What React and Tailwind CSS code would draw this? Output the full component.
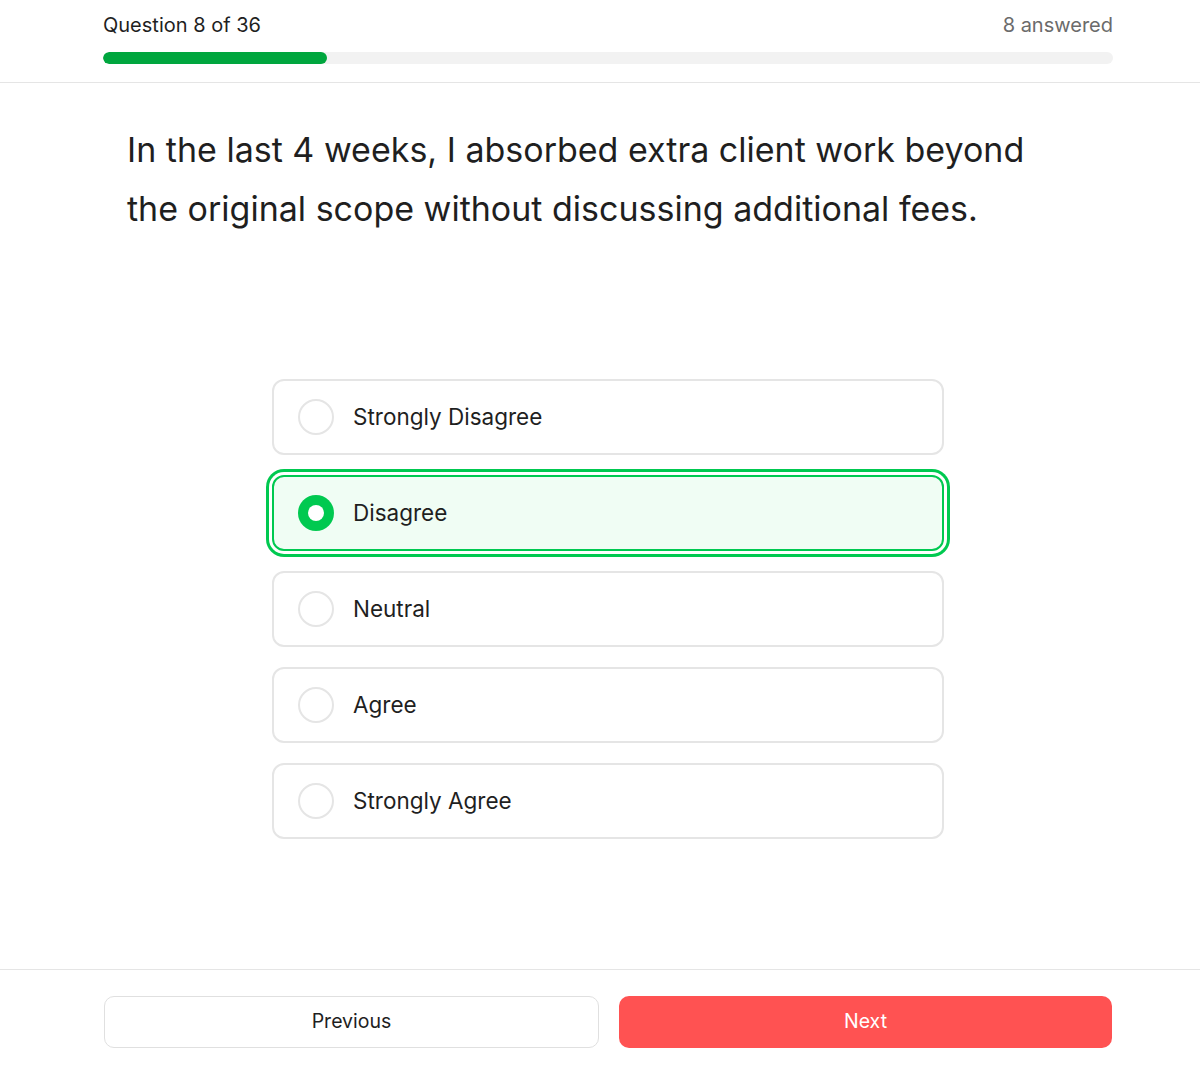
import React, { useState } from "react";

const OPTIONS = ["Strongly Disagree", "Disagree", "Neutral", "Agree", "Strongly Agree"];

export default function App() {
  const [selected, setSelected] = useState(1);
  const current = 8;
  const total = 36;

  return (
    <div
      className="h-screen flex flex-col bg-white text-[#1f1f1f]"
      style={{ fontFamily: "Inter, 'Noto Sans', sans-serif" }}
    >
      {/* header */}
      <header className="border-b border-[#e5e5e5] pl-4">
        <div className="w-[1010px] mx-auto pt-[12px] pb-[18px]">
          <div className="flex items-center justify-between h-[26px]">
            <span className="text-[20px] text-[#1f1f1f]">
              Question {current} of {total}
            </span>
            <span className="text-[20px] text-[#6b6b6b]">{current} answered</span>
          </div>
          <div className="mt-[14px] h-[12px] rounded-full bg-[#f2f2f2] overflow-hidden">
            <div className="h-full rounded-full bg-[#00a63e]" style={{ width: `${(current / total) * 100}%` }} />
          </div>
        </div>
      </header>

      {/* question + answers */}
      <main className="flex-1 pl-4">
        <div className="w-[1010px] mx-auto px-6 pt-[37px]">
          <h1 className="max-w-[930px] text-[34px] leading-[59px] text-[#1f1f1f]">
            In the last 4 weeks, I absorbed extra client work beyond the original scope without discussing additional fees.
          </h1>
        </div>

        <div className="w-[672px] mx-auto mt-[141px] flex flex-col gap-5">
          {OPTIONS.map((label, i) => {
            const active = i === selected;
            return (
              <button
                key={label}
                onClick={() => setSelected(i)}
                className={`h-[76px] w-full flex items-center gap-[19px] px-6 rounded-xl border-2 text-left ${
                  active
                    ? "border-[#00c950] bg-[#f0fdf4] ring-[3px] ring-[#00c950] ring-offset-[3px]"
                    : "border-[#e5e5e5] bg-white"
                }`}
              >
                <span
                  className={`w-[36px] h-[36px] rounded-full flex items-center justify-center shrink-0 ${
                    active ? "bg-[#00c950]" : "border-2 border-[#e5e5e5] bg-white"
                  }`}
                >
                  {active && <span className="w-[16px] h-[16px] rounded-full bg-white" />}
                </span>
                <span className="text-[22.5px] text-[#1f1f1f]">{label}</span>
              </button>
            );
          })}
        </div>
      </main>

      {/* footer */}
      <footer className="border-t border-[#e5e5e5] pt-[26px] pb-[21px] pl-4">
        <div className="w-[1008px] mx-auto flex gap-5">
          <button className="flex-1 h-[52px] rounded-[10px] border border-[#e0e0e0] bg-white text-[19.5px] text-[#1f1f1f]">
            Previous
          </button>
          <button className="flex-1 h-[52px] rounded-[10px] bg-[#ff5252] text-[19.5px] text-white">
            Next
          </button>
        </div>
      </footer>
    </div>
  );
}
